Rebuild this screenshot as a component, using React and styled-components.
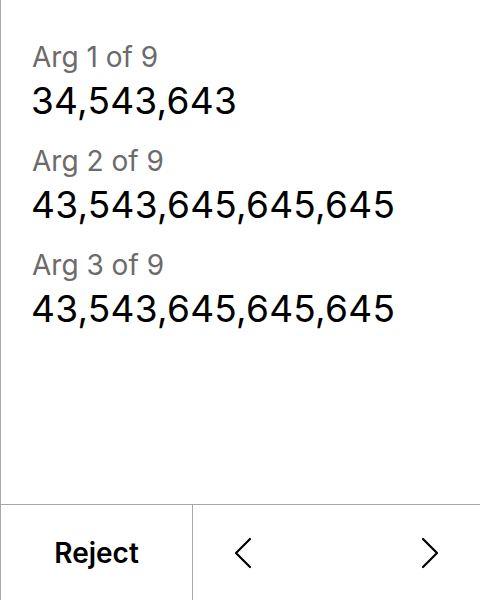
import React from "react";
import styled, { createGlobalStyle } from "styled-components";

const Global = createGlobalStyle`
  html, body { margin: 0; padding: 0; background: #fff; }
  body { font-family: Inter, "Noto Sans", sans-serif; }
`;

const Panel = styled.div`
  width: 480px;
  height: 600px;
  box-sizing: border-box;
  border-left: 1px solid #a8a8a8;
  display: flex;
  flex-direction: column;
`;

const List = styled.div`
  flex: 1;
  padding: 36px 0 0 31px;
  display: flex;
  flex-direction: column;
  gap: 17px;
`;

const Arg = styled.div`
  display: flex;
  flex-direction: column;
`;

const Label = styled.div`
  font-size: 28px;
  line-height: 42px;
  color: #6b6b6b;
`;

const Value = styled.div`
  font-size: 37px;
  line-height: 45px;
  letter-spacing: 0.25px;
  margin-left: -1px;
  color: #000;
`;

const Footer = styled.div`
  height: 95px;
  border-top: 1px solid #a8a8a8;
  display: flex;
`;

const RejectButton = styled.button`
  width: 192px;
  border: none;
  border-right: 1px solid #a8a8a8;
  background: none;
  font-family: inherit;
  font-size: 28px;
  font-weight: 600;
  color: #000;
`;

const Nav = styled.div`
  flex: 1;
  display: flex;
  justify-content: space-between;
  align-items: center;
  padding: 0 40px;
`;

const Arrow = styled.button`
  border: none;
  background: none;
  padding: 0;
  width: 20px;
  height: 32px;
  display: flex;
  align-items: center;
  justify-content: center;
`;

const Chevron = ({ dir }) => (
  <svg width="20" height="32" viewBox="0 0 20 32" fill="none" stroke="#000" strokeWidth="2.2" strokeLinecap="round" strokeLinejoin="round">
    {dir === "left" ? <path d="M17 2 L3 16 L17 30" /> : <path d="M3 2 L17 16 L3 30" />}
  </svg>
);

const args = [
  { label: "Arg 1 of 9", value: "34,543,643" },
  { label: "Arg 2 of 9", value: "43,543,645,645,645" },
  { label: "Arg 3 of 9", value: "43,543,645,645,645" },
];

export default function App() {
  return (
    <>
      <Global />
      <Panel>
        <List>
          {args.map((a, i) => (
            <Arg key={i}>
              <Label>{a.label}</Label>
              <Value>{a.value}</Value>
            </Arg>
          ))}
        </List>
        <Footer>
          <RejectButton>Reject</RejectButton>
          <Nav>
            <Arrow><Chevron dir="left" /></Arrow>
            <Arrow><Chevron dir="right" /></Arrow>
          </Nav>
        </Footer>
      </Panel>
    </>
  );
}
